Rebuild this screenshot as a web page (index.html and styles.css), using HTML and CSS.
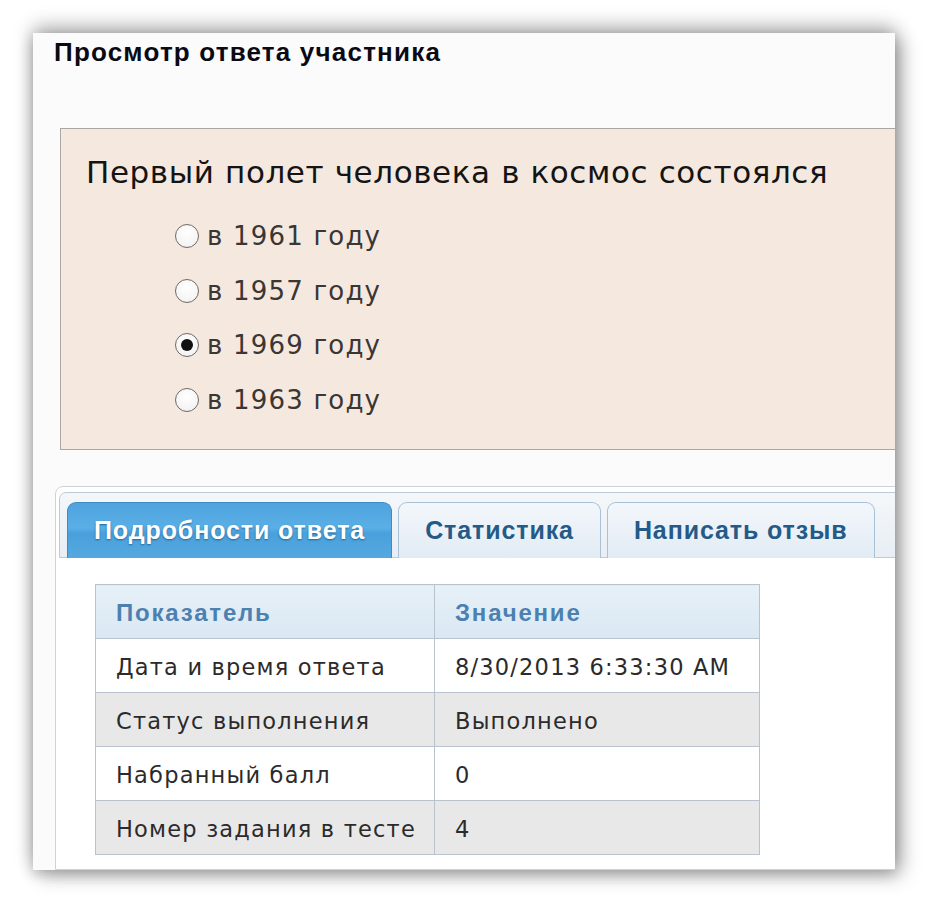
FILE: index.html
```html
<!DOCTYPE html>
<html lang="ru">
<head>
<meta charset="utf-8">
<title>Просмотр ответа участника</title>
<link rel="stylesheet" href="styles.css">
</head>
<body>
<div class="window">
  <h1 class="title">Просмотр ответа участника</h1>
  <div class="question">
    <div class="q-text">Первый полет человека в космос состоялся</div>
    <ul class="options">
      <li class="option"><span class="radio"></span><span class="opt-label">в 1961 году</span></li>
      <li class="option"><span class="radio"></span><span class="opt-label">в 1957 году</span></li>
      <li class="option"><span class="radio checked"></span><span class="opt-label">в 1969 году</span></li>
      <li class="option"><span class="radio"></span><span class="opt-label">в 1963 году</span></li>
    </ul>
  </div>
  <div class="tabs">
    <div class="tab-nav">
      <div class="tab active">Подробности ответа</div>
      <div class="tab">Статистика</div>
      <div class="tab">Написать отзыв</div>
    </div>
    <div class="panel">
      <table class="details">
        <thead>
          <tr><th class="c1">Показатель</th><th class="c2">Значение</th></tr>
        </thead>
        <tbody>
          <tr><td>Дата и время ответа</td><td>8/30/2013 6:33:30 AM</td></tr>
          <tr class="alt"><td>Статус выполнения</td><td>Выполнено</td></tr>
          <tr><td>Набранный балл</td><td>0</td></tr>
          <tr class="alt"><td>Номер задания в тесте</td><td>4</td></tr>
        </tbody>
      </table>
    </div>
  </div>
</div>
</body>
</html>
```
FILE: styles.css
```css
html, body {
  margin: 0;
  padding: 0;
  background: #ffffff;
}
body {
  width: 926px;
  height: 902px;
  overflow: hidden;
}
.window {
  margin: 33px 0 0 33px;
  width: 862px;
  height: 837px;
  background: #fbfbfc;
  box-shadow: 0 -7px 18px rgba(0,0,0,0.28), 7px 6px 18px rgba(0,0,0,0.26), -2px 5px 12px rgba(0,0,0,0.14);
  overflow: hidden;
  display: flex;
  flex-direction: column;
}
.title {
  margin: 0;
  padding: 4px 0 0 21px;
  font-family: "Liberation Sans", Arial, sans-serif;
  font-weight: bold;
  font-size: 26px;
  letter-spacing: 1.2px;
  line-height: 30px;
  color: #0a0a14;
}
.question {
  margin: 61px 0 0 27px;
  width: 900px;
  height: 320px;
  flex: none;
  border: 1px solid #a9a6a3;
  background: #f5e8df;
}
.q-text {
  padding: 25px 0 0 25px;
  font-family: "DejaVu Sans", Verdana, sans-serif;
  font-size: 31px;
  letter-spacing: 0.6px;
  line-height: 36px;
  color: #141414;
}
.options {
  list-style: none;
  margin: 19px 0 0 114px;
  padding: 0;
  display: flex;
  flex-direction: column;
}
.option {
  display: flex;
  align-items: center;
  height: 54.5px;
  gap: 8px;
}
.radio {
  width: 22px;
  height: 22px;
  border: 1.5px solid #6f6a67;
  border-radius: 50%;
  background: radial-gradient(circle at 50% 35%, #ffffff 0%, #f4f4f4 70%, #e2e2e2 100%);
  display: flex;
  align-items: center;
  justify-content: center;
  flex: none;
}
.radio.checked::after {
  content: "";
  width: 12px;
  height: 12px;
  border-radius: 50%;
  background: #111111;
}
.opt-label {
  font-family: "DejaVu Sans", Verdana, sans-serif;
  font-size: 26px;
  letter-spacing: 1.2px;
  line-height: 32px;
  color: #3a3634;
}
.tabs {
  margin: 36px 0 0 22px;
  width: 900px;
  flex: 1;
  border: 1px solid #cdd3d9;
  border-radius: 8px 0 0 0;
  background: #ffffff;
  padding: 5px 0 0 3px;
  display: flex;
  flex-direction: column;
}
.tab-nav {
  display: flex;
  align-items: flex-end;
  gap: 6px;
  height: 66px;
  box-sizing: border-box;
  padding: 0 0 0 7px;
  border: 1px solid #bccbd8;
  border-radius: 7px 0 0 0;
  background: linear-gradient(#f4f7fa, #e8eef4);
}
.tab {
  height: 56px;
  box-sizing: border-box;
  margin-bottom: -1px;
  display: flex;
  align-items: center;
  justify-content: center;
  border: 1px solid #a9c1d7;
  border-bottom: none;
  border-radius: 9px 9px 0 0;
  background: linear-gradient(#f3f7fb, #e2ebf4);
  font-family: "Liberation Sans", Tahoma, sans-serif;
  font-weight: bold;
  font-size: 25px;
  letter-spacing: 0.9px;
  color: #245a88;
  padding: 0 26px;
}
.tab.active {
  background: linear-gradient(#4ea3df 0%, #5aafe6 45%, #4aa0db 55%, #55a9e0 100%);
  border-color: #3d8cc7;
  color: #ffffff;
  text-shadow: 0 1px 2px rgba(0,60,110,0.6);
}
.panel {
  padding: 26px 0 0 36px;
}
.details {
  border-collapse: collapse;
  width: 665px;
  font-family: "DejaVu Sans", Verdana, sans-serif;
  font-size: 22.5px;
  letter-spacing: 1.2px;
  color: #2c2a2a;
}
.details th, .details td {
  border: 1px solid #b9c3cd;
  height: 54px;
  box-sizing: border-box;
  padding: 3px 0 0 20px;
  text-align: left;
  font-weight: normal;
}
.details th {
  font-family: "Liberation Sans", Tahoma, sans-serif;
  font-weight: bold;
  font-size: 24px;
  letter-spacing: 1.8px;
  color: #4c80b0;
  background: linear-gradient(#e6f0f7, #dae8f3);
}
.details .c1 {
  width: 339px;
}
.details tr.alt td {
  background: #e8e8e8;
}
.details tbody tr:not(.alt) td {
  background: #ffffff;
}
```
